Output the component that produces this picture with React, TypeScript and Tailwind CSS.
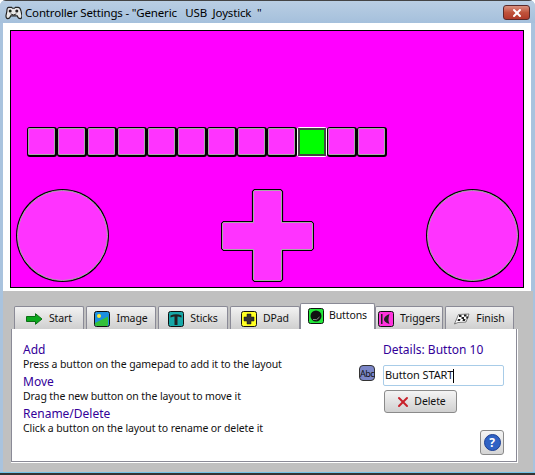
import React from 'react';
import { X } from 'lucide-react';

const font = { fontFamily: '"Noto Sans", "Liberation Sans", sans-serif' };

const GamepadIcon = () => (
  <svg width="17" height="16" viewBox="0 0 18 16" className="shrink-0">
    <path d="M4 2h3l1 1h2l1-1h3q2 0 3 4l1 5q0 3-2 3t-3-3H6q-1 3-3 3t-2-3l1-5q0-4 2-4z" fill="#e8e8e8" stroke="#222" strokeWidth="1.2" />
    <circle cx="5.5" cy="6" r="1.6" fill="#222" />
    <circle cx="12.5" cy="6" r="1.6" fill="#222" />
    <path d="M6 9q3 2 6 0" fill="none" stroke="#222" />
  </svg>
);

const StartIcon = () => (
  <svg width="17" height="12" viewBox="0 0 17 12">
    <path d="M0.5 3.500h9V0.700L16 6l-6.500 5.300V8.500h-9z" fill="#0aa81c" stroke="#0b6e14" />
  </svg>
);

const ImageIcon = () => (
  <svg width="16" height="16" viewBox="0 0 16 16">
    <rect x="0.500" y="0.500" width="15" height="15" rx="2" fill="#1c8fe0" stroke="#111" />
    <circle cx="5" cy="5" r="2" fill="#ffee33" />
    <path d="M1 14V12L14 5.500V14q0 1-1 1H2z" fill="#33c03a" />
  </svg>
);

const SticksIcon = () => (
  <svg width="16" height="16" viewBox="0 0 16 16">
    <rect x="0.500" y="0.500" width="15" height="15" rx="2" fill="#17a8a8" stroke="#111" />
    <path d="M2.500 6.500V4.500Q8 2 13.500 4.500V6.500Q11 5.500 9.500 5.500V14h-3V5.500Q5 5.500 2.500 6.500z" fill="#222" />
  </svg>
);

const DPadIcon = () => (
  <svg width="16" height="16" viewBox="0 0 16 16">
    <rect x="0.500" y="0.500" width="15" height="15" rx="2" fill="#ffff22" stroke="#111" />
    <path d="M6 3h4v3h3v4h-3v3H6v-3H3V6h3z" fill="#333" stroke="#111" strokeWidth="0.500" />
  </svg>
);

const ButtonsIcon = () => (
  <svg width="16" height="16" viewBox="0 0 16 16">
    <rect x="0.500" y="0.500" width="15" height="15" rx="2" fill="#22e83a" stroke="#111" />
    <circle cx="8" cy="8" r="5.500" fill="#111" />
    <path d="M5 11.500q4 1.500 6.500-2.500" fill="none" stroke="#aaa" strokeWidth="0.800" />
  </svg>
);

const TriggersIcon = () => (
  <svg width="16" height="16" viewBox="0 0 16 16">
    <rect x="0.500" y="0.500" width="15" height="15" rx="2" fill="#ff33dd" stroke="#111" />
    <path d="M3 3h1.500v10H3zM11.500 3Q6.500 5 6 8t5.500 5Q9.500 9 11.500 3z" fill="#222" />
  </svg>
);

const FinishIcon = () => (
  <svg width="16" height="16" viewBox="0 0 16 16">
    <path d="M0.500 13L4.500 3.500 15 3 12 11 4 11.500z" fill="#fff" stroke="#333" strokeWidth="0.600" />
    <path d="M5 4h2.500v2H5zM10 3.500h2.500v2H10zM7.500 6H10v2H7.500zM12.500 5.500H14.500L14 7.500H12zM4 8h2.500L6 10H3.500zM9 8h2.500L11 10H8.500z" fill="#222" />
  </svg>
);

const AbcIcon = () => (
  <div className="flex h-[16px] w-[16px] items-center justify-center rounded-[4px] border border-[#333] bg-[#7b86c8] text-[9px] leading-none tracking-[-0.5px] text-[#111]">
    Abc
  </div>
);

const HelpIcon = () => (
  <div className="flex h-[17px] w-[17px] items-center justify-center rounded-full border border-[#1c3f94] bg-[#2f62c4] text-[12px] font-bold leading-none text-white">
    ?
  </div>
);

const tabs = [
  { label: 'Start', width: 'w-[70px]', icon: <StartIcon />, gap: 'gap-[6px]' },
  { label: 'Image', width: 'w-[70px]', icon: <ImageIcon />, gap: 'gap-[6px]' },
  { label: 'Sticks', width: 'w-[70px]', icon: <SticksIcon />, gap: 'gap-[6px]' },
  { label: 'DPad', width: 'w-[70px]', icon: <DPadIcon />, gap: 'gap-[6px]' },
  { label: 'Buttons', width: 'w-[75px]', icon: <ButtonsIcon />, gap: 'gap-[5px]', active: true },
  { label: 'Triggers', width: 'w-[68px]', icon: <TriggersIcon />, gap: 'gap-[6px]' },
  { label: 'Finish', width: 'w-[69px]', icon: <FinishIcon />, gap: 'gap-[6px]' },
];

const help = [
  { title: 'Add', text: 'Press a button on the gamepad to add it to the layout' },
  { title: 'Move', text: 'Drag the new button on the layout to move it' },
  { title: 'Rename/Delete', text: 'Click a button on the layout to rename or delete it' },
];

const App: React.FC = () => {
  return (
    <div style={font} className="flex h-[475px] w-[535px] flex-col overflow-hidden rounded-t-[6px] bg-[#a9c3de] text-[10.5px] tracking-[-0.1px] text-[#111]">
      {/* title bar */}
      <div className="flex h-[23px] shrink-0 items-center border-t border-[#444] bg-gradient-to-b from-[#b9cee3] to-[#a5c0dc] pl-[5px] pr-[5px] pt-[2px]">
        <GamepadIcon />
        <span className="ml-[3px] whitespace-pre text-[11.5px] tracking-[-0.17px] text-black">Controller Settings - "Generic   USB  Joystick  "</span>
        <div className="mb-[1px] ml-auto flex h-[15px] w-[27px] items-center justify-center rounded-[3px] border border-[#5a2a2a] bg-gradient-to-b from-[#d9917f] via-[#c0533c] to-[#b03a2a]">
          <X size={12} strokeWidth={4} className="text-white" />
        </div>
      </div>

      {/* canvas */}
      <div className="ml-[3px] mr-[4px] shrink-0 bg-white px-[7px] pb-[3px] pt-[7px]">
        <div className="relative h-[258px] w-[514px] border border-black bg-[#ff00ff]">
          {Array.from({ length: 12 }).map((_, i) => (
            <div
              key={i}
              style={{ left: 16 + i * 30 }}
              className={
                i === 9
                  ? 'absolute top-[96px] h-[30px] w-[30px] rounded-[3px] bg-white p-[1px]'
                  : 'absolute top-[96px] h-[30px] w-[30px] rounded-[3px] bg-black pb-[2px] pl-[1px] pr-[2px] pt-[1px]'
              }
            >
              <div
                className={
                  i === 9
                    ? 'h-full w-full border-2 border-[#444] bg-[#00ff00]'
                    : 'h-full w-full rounded-[1px] border border-[#a8a8a8] bg-[#ff33ff]'
                }
              />
            </div>
          ))}
          <div className="absolute left-[5px] top-[158px] h-[93px] w-[93px] rounded-full bg-black p-[1px]">
            <div className="h-full w-full rounded-full border border-[#a8a8a8] bg-[#ff33ff]" />
          </div>
          <div className="absolute left-[415px] top-[158px] h-[93px] w-[93px] rounded-full bg-black p-[1px]">
            <div className="h-full w-full rounded-full border border-[#a8a8a8] bg-[#ff33ff]" />
          </div>
          <svg width="93" height="93" viewBox="0 0 93 93" className="absolute left-[210px] top-[158px]">
            <path d="M33.500 0.500h26l2 2v30h29l2 2v25l-2 2h-29v29l-2 2h-26l-2-2v-29h-29l-2-2v-25l2-2h29v-30z" fill="#ff33ff" stroke="#000" strokeWidth="1.200" />
            <path d="M33.500 1.500h26l1 1v31h30l1 1v25l-1 1h-30v30l-1 1h-26l-1-1v-30h-30l-1-1v-25l1-1h30v-31z" fill="none" stroke="#a8a8a8" />
          </svg>
        </div>
      </div>

      {/* tabs + panel */}
      <div className="ml-[3px] mr-[2px] flex flex-1 flex-col bg-[#c0c0c0] pb-[9px] pl-[8px] pr-[15px]">
        <div className="ml-[3px] mt-[12px] flex h-[26px] shrink-0 items-end gap-[2px]">
          {tabs.map((t) =>
            t.active ? (
              <div
                key={t.label}
                className={`relative z-10 -mx-[2px] flex h-[26px] ${t.width} items-center justify-center ${t.gap} rounded-t-[2px] border border-b-0 border-[#8a8a96] bg-white pb-[1px]`}
              >
                {t.icon}
                <span>{t.label}</span>
              </div>
            ) : (
              <div
                key={t.label}
                className={`flex h-[23px] ${t.width} items-center justify-center ${t.gap} rounded-t-[2px] border border-b-0 border-[#8a8a96] bg-gradient-to-b from-[#f2f2f2] to-[#cfcfcf] pt-[1px]`}
              >
                {t.icon}
                <span>{t.label}</span>
              </div>
            ),
          )}
        </div>
        <div className="flex flex-1 border-b border-r border-white">
          <div className="relative flex flex-1 border border-t-0 border-[#8a8a96] bg-white pl-[11px] pr-[12px] pt-[12px]">
            <div className="flex flex-1 flex-col">
              {help.map((h) => (
                <div key={h.title} className="flex h-[32px] flex-col">
                  <span className="h-[17px] text-[12px] leading-[18px] tracking-normal text-[#330099]">{h.title}</span>
                  <span className="h-[12px] leading-[12px]">{h.text}</span>
                </div>
              ))}
            </div>
            <div className="flex w-[121px] shrink-0 flex-col items-start">
              <div className="mt-[1px] h-[16px] whitespace-pre text-[12px] leading-[16px] tracking-normal text-[#330099]">Details: Button 10</div>
              <div className="mt-[7px] flex h-[21px] items-start">
                <div className="-ml-[24px] mr-[8px]">
                  <AbcIcon />
                </div>
                <div className="flex h-[21px] w-[121px] items-center rounded-[2px] border border-[#a8cce8] pl-[1px] text-[11px]">
                  Button START<span className="h-[14px] w-px bg-black" />
                </div>
              </div>
              <div className="ml-[1px] mt-[4px] flex h-[23px] w-[73px] items-center justify-center gap-[3px] rounded-[3px] border border-[#8a8a8a] bg-gradient-to-b from-[#f4f4f4] to-[#d0d0d0] text-[10.5px]">
                <X size={16} strokeWidth={3} className="text-[#c8202a]" />
                Delete
              </div>
            </div>
            <div className="absolute bottom-[6px] right-[12px] flex h-[25px] w-[24px] items-center justify-center rounded-[3px] border border-[#8a8a8a] bg-gradient-to-b from-[#f4f4f4] to-[#d4d4d4]">
              <HelpIcon />
            </div>
          </div>
        </div>
      </div>

      {/* bottom frame */}
      <div className="h-[3px] shrink-0 border-b-2 border-[#333] bg-[#6fc3e8]" />
    </div>
  );
};

export default App;
